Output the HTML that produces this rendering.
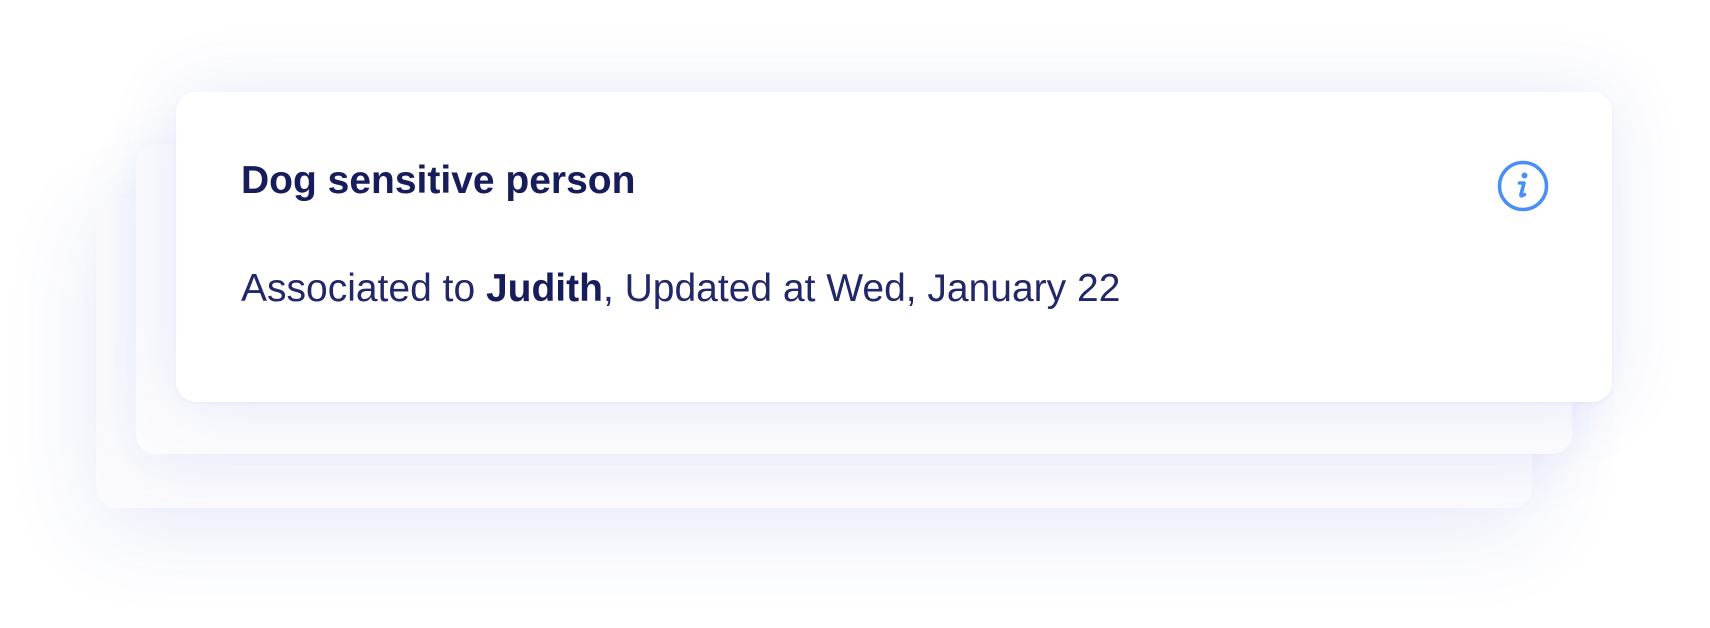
<!DOCTYPE html>
<html><head><meta charset="utf-8"><style>
html,body{margin:0;padding:0;background:#fff;width:1710px;height:628px;overflow:hidden;position:relative;font-family:"Liberation Sans",Arial,sans-serif;}
.card{position:absolute;border-radius:20px;background:#fff;}
.c3{left:96px;top:198px;width:1436px;height:310px;background:#fbfbfe;box-shadow:0 20px 90px rgba(70,90,210,0.13);}
.c2{left:136px;top:144px;width:1436px;height:310px;background:#fcfcfe;box-shadow:0 10px 60px rgba(70,90,210,0.10);}
.c1{left:176px;top:92px;width:1436px;height:310px;background:#fff;box-shadow:0 0 70px rgba(70,90,210,0.13),0 2px 4px rgba(70,90,210,0.05);}
.title{position:absolute;left:241px;top:159px;font-size:39px;font-weight:bold;color:#171c5b;line-height:44px;white-space:nowrap;}
.body{position:absolute;left:241px;top:267px;font-size:39px;color:#22276a;line-height:44px;white-space:nowrap;}
.body b{font-weight:bold;color:#171c5b;}
svg{position:absolute;left:1497px;top:160px;}
</style></head><body>
<div class="card c3"></div>
<div class="card c2"></div>
<div class="card c1"></div>
<div class="title">Dog sensitive person</div>
<div class="body">Associated to <b>Judith</b>, Updated at Wed, January 22</div>
<svg width="52" height="52" viewBox="0 0 52 52">
<circle cx="26" cy="26" r="23.5" fill="none" stroke="#4a8ff5" stroke-width="3.5"/>
<circle cx="27.5" cy="15.5" r="3" fill="#4a8ff5"/>
<path d="M22.5 23 L27 23 L24 34.5 Q23.5 36.5 25.5 35.5 L27.5 34.5" fill="none" stroke="#4a8ff5" stroke-width="3.6" stroke-linecap="round" stroke-linejoin="round"/>
</svg>
</body></html>
